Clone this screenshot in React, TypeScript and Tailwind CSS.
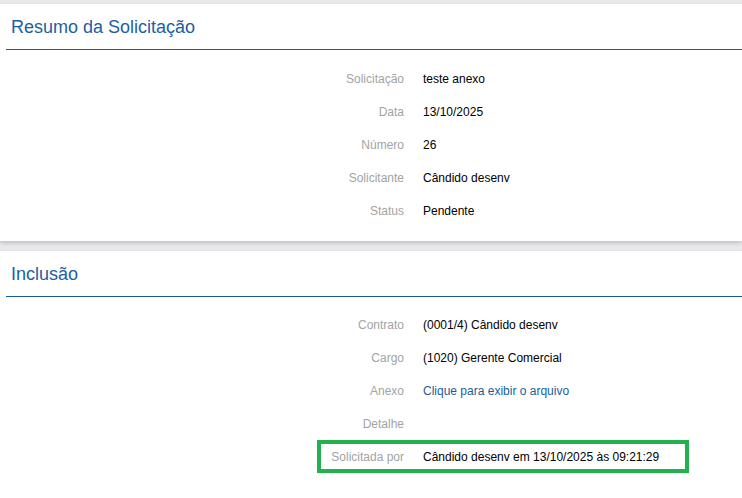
import React from "react";

type Row = { label: string; value: string; link?: boolean; highlight?: boolean };

const resumo: Row[] = [
  { label: "Solicitação", value: "teste anexo" },
  { label: "Data", value: "13/10/2025" },
  { label: "Número", value: "26" },
  { label: "Solicitante", value: "Cândido desenv" },
  { label: "Status", value: "Pendente" },
];

const inclusao: Row[] = [
  { label: "Contrato", value: "(0001/4) Cândido desenv" },
  { label: "Cargo", value: "(1020) Gerente Comercial" },
  { label: "Anexo", value: "Clique para exibir o arquivo", link: true },
  { label: "Detalhe", value: "" },
  { label: "Solicitada por", value: "Cândido desenv em 13/10/2025 às 09:21:29", highlight: true },
];

function Card({
  title,
  rows,
  className,
  bodyClass,
}: {
  title: string;
  rows: Row[];
  className?: string;
  bodyClass?: string;
}) {
  return (
    <section className={"bg-white shadow-[0_2px_4px_rgba(0,0,0,0.18)] " + (className ?? "")}>
      <div className="ml-[6px] pl-[5px] pt-[13px] pb-[11px] border-b-[1.5px] border-[#165c9c]">
        <h2 className="text-[18px] leading-[21px] text-[#1c60a0]">{title}</h2>
      </div>
      <div className={"flex flex-col " + (bodyClass ?? "")}>
        {rows.map((r) => (
          <div
            key={r.label}
            className={
              "ml-[317px] w-[372px] h-[33px] flex items-center border-4 " +
              (r.highlight ? "border-[#22b14c]" : "border-transparent")
            }
          >
            <span className="w-[83px] text-right text-[#a3a3a3] shrink-0">{r.label}</span>
            <span className={"ml-[19px] whitespace-nowrap " + (r.link ? "text-[#1a5d9c]" : "text-black")}>
              {r.value}
            </span>
          </div>
        ))}
      </div>
    </section>
  );
}

export default function App() {
  return (
    <div
      className="h-[498px] overflow-hidden bg-[#e9e9eb] pt-[4px] text-[12px] leading-[14px]"
      style={{ fontFamily: '"Liberation Sans", Arial, sans-serif' }}
    >
      <Card title="Resumo da Solicitação" rows={resumo} bodyClass="pt-[12px] pb-[14px]" />
      <Card title="Inclusão" rows={inclusao} className="mt-[10px]" bodyClass="pt-[11px] pb-[40px]" />
    </div>
  );
}
